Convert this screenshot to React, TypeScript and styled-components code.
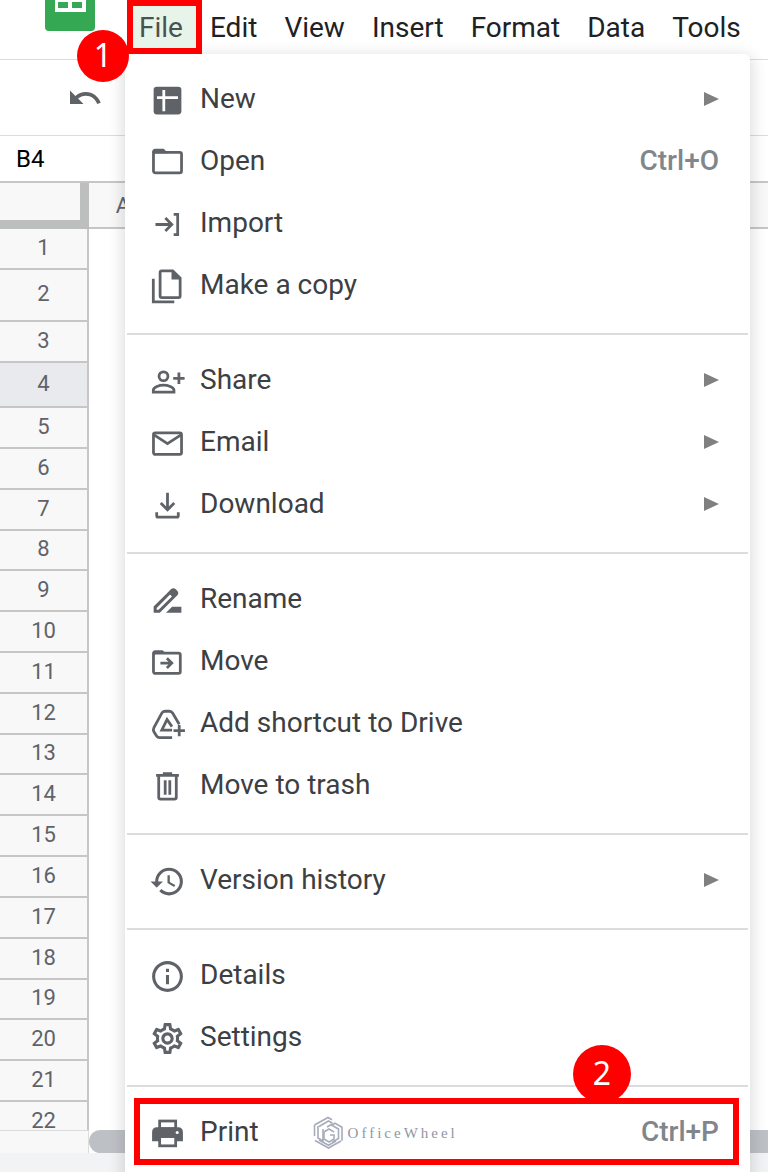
import React from "react";
import styled, { createGlobalStyle } from "styled-components";
import {
  MdDriveFileRenameOutline,
  MdHistory,
  MdInfoOutline,
  MdOutlineSettings,
  MdUndo,
} from "react-icons/md";

const GlobalStyle = createGlobalStyle`
  *, *::before, *::after { box-sizing: border-box; }
  body {
    margin: 0;
    background: #fff;
    color: #202124;
    font-family: Roboto, "Liberation Sans", sans-serif;
  }
  button, input { font: inherit; color: inherit; }
`;

const Page = styled.div`
  position: relative;
  display: flex;
  flex-direction: column;
  height: 100vh;
  overflow: hidden;
`;

/* ---------- header ---------- */

const Header = styled.header`
  flex: none;
  display: flex;
  height: 60px;
  border-bottom: 1px solid #dadce0;
`;

const LogoSlot = styled.div`
  flex: none;
  width: 126px;
  padding-left: 45px;

  svg { display: block; }
`;

const MenuBar = styled.nav`
  display: flex;
  align-items: flex-start;
  gap: 1px;
  padding-top: 5px;
`;

const MenuBarButton = styled.button`
  position: relative;
  height: 44px;
  padding: 0 13px;
  border: 0;
  background: none;
  font-size: 28px;
  line-height: 46px;
  white-space: nowrap;
`;

const MenuBarLabel = styled.span<{ $open?: boolean }>`
  position: relative;
  z-index: 4;
  color: ${(p) => (p.$open ? "#4b524e" : "#202124")};
`;

const Toolbar = styled.div`
  flex: none;
  display: flex;
  align-items: center;
  height: 76px;
  padding-left: 67px;
  border-bottom: 1px solid #dadce0;
`;

const ToolButton = styled.button`
  display: flex;
  padding: 0;
  border: 0;
  background: none;
  color: #5f6368;
`;

const NameBar = styled.div`
  flex: none;
  height: 47px;
  border-bottom: 2px solid #c6c6c6;
`;

const NameBox = styled.input`
  width: 110px;
  height: 45px;
  padding: 0 16px;
  border: 0;
  outline: 0;
  background: none;
  color: #000;
  font-size: 24px;
`;

/* ---------- sheet ---------- */

const SheetArea = styled.main`
  flex: 1;
  min-height: 0;
  overflow: hidden;
`;

const Sheet = styled.table`
  width: 100%;
  table-layout: fixed;
  border-collapse: separate;
  border-spacing: 0;
`;

const Corner = styled.td`
  width: 89px;
  height: 46px;
  padding: 0;
  border: solid #bcbfbe;
  border-width: 0 9px 9px 0;
  background: #f8f8f8;
`;

const ColumnHead = styled.th<{ $width?: number }>`
  width: ${(p) => (p.$width ? `${p.$width}px` : "auto")};
  padding: 0;
  border-bottom: 2px solid #c6c6c6;
  background: #f8f8f8;
  color: #5f6368;
  font-size: 22px;
  font-weight: 400;
`;

const RowHead = styled.th<{ $height: number; $active?: boolean }>`
  height: ${(p) => p.$height}px;
  padding: 0 0 2px;
  border: solid #c6c6c6;
  border-width: 0 2px 2px 0;
  background: ${(p) => (p.$active ? "#e8eaed" : "#f8f8f8")};
  color: #5f6368;
  font-size: 22px;
  line-height: 22px;
  font-weight: 400;
`;

const ScrollRow = styled.div`
  flex: none;
  display: flex;
  height: 23px;
`;

const ScrollCorner = styled.div`
  width: 89px;
  border: solid #dcdcdc;
  border-width: 1px 1px 0 0;
  background: #f8f8f8;
`;

const ScrollThumb = styled.div`
  flex: 1;
  border-radius: 12px 0 0 12px;
  background: #bdc1c6;
`;

const Footer = styled.footer`
  flex: none;
  height: 19px;
  background: #f1f3f4;
`;

/* ---------- file menu ---------- */

const Menu = styled.div`
  position: absolute;
  z-index: 2;
  top: 54px;
  left: 125px;
  right: 18px;
  max-width: 625px;
  padding: 14px 0;
  border-radius: 6px;
  background: #fff;
  box-shadow: 0 4px 14px 3px rgba(60, 64, 67, 0.17);
`;

const Separator = styled.hr`
  height: 2px;
  margin: 17px 2px 14px;
  border: 0;
  background: #dadce0;
`;

const MenuItem = styled.button`
  position: relative;
  display: flex;
  align-items: center;
  width: 100%;
  height: 62px;
  padding: 0 31px 0 24px;
  border: 0;
  background: none;
  color: #3c4043;
  font-size: 28px;
  line-height: 32px;
  text-align: left;
`;

const ItemIcon = styled.span`
  flex: none;
  display: flex;
  width: 37px;
  height: 37px;
  margin-right: 14px;
  padding-top: 1px;
  color: #5f6368;

  svg { flex: none; }
`;

const Shortcut = styled.span`
  margin-left: auto;
  color: #80868b;
  font-weight: 500;
`;

const Arrow = styled.svg`
  margin-left: auto;
  fill: #808080;
`;

const Watermark = styled.span`
  display: flex;
  align-items: center;
  gap: 4px;
  margin-left: 54px;
  padding-top: 2px;
  color: #8f96a6;
  font-family: "Liberation Serif", serif;
  font-size: 15px;
  letter-spacing: 3px;
`;

/* ---------- step annotations ---------- */

const FileFrame = styled.span`
  position: absolute;
  z-index: 3;
  inset: -5px -6px -5px 1px;
  border: 6px solid #f00;
  background: #e6f4ea;
`;

const PrintFrame = styled.span`
  position: absolute;
  inset: -3px 11px -2px 9px;
  border: 6px solid #f00;
`;

const Badge = styled.span<{ $size: number; $top: number; $left: number }>`
  position: absolute;
  z-index: 5;
  top: ${(p) => p.$top}px;
  left: ${(p) => p.$left}px;
  width: ${(p) => p.$size}px;
  height: ${(p) => p.$size}px;
  border-radius: 50%;
  background: #f00;
  color: #fff;
  font-family: "Noto Sans", sans-serif;
  font-size: 32px;
  line-height: ${(p) => p.$size - 2}px;
  text-align: center;
`;

const BadgeLayer = styled.span`
  position: absolute;
  inset: 0;
  z-index: 0;

  & > span { z-index: 0; }
`;

/* ---------- icons ---------- */

const Line = ({ children }: { children: React.ReactNode }) => (
  <svg width="37" height="37" viewBox="0 0 24 24" fill="none" stroke="currentColor" strokeWidth="1.8" aria-hidden="true">
    {children}
  </svg>
);

const NewIcon = () => (
  <Line>
    <rect x="3" y="3" width="18" height="18" rx="2" fill="currentColor" stroke="none" />
    <path d="M9.6 5.2v13.8M5.2 10.2h13.6" stroke="#fff" />
  </Line>
);

const OpenIcon = () => (
  <Line>
    <path d="M2 6V5c0-1.100.9-2 2-2h5.500l3 3z" fill="currentColor" stroke="none" />
    <rect x="2.9" y="5.5" width="18.2" height="13.2" rx="1.2" />
  </Line>
);

const ImportIcon = () => (
  <Line>
    <path d="M4.2 12h10M10.6 7.8l4.2 4.2-4.2 4.2M16 5.4h2.6v13.2H16" />
  </Line>
);

const CopyIcon = () => (
  <Line>
    <path d="M2.8 7v15h13.6" />
    <path d="M8.2 1.8h7.2l4.8 4.8v11.6c0 .6-.4 1-1 1h-11c-.6 0-1-.4-1-1V2.8c0-.6.4-1 1-1z" />
    <path d="M14.6 1.2v6.2h6.2z" fill="currentColor" stroke="none" />
  </Line>
);

const ShareIcon = () => (
  <Line>
    <circle cx="9.4" cy="8.6" r="2.9" />
    <path d="M2.8 18.9v-1.3c0-2 4-3.2 6.6-3.2s6.8 1.2 6.8 3.2v1.3z" />
    <path d="M19.4 6.2v7.4M15.7 9.9h7.4" />
  </Line>
);

const EmailIcon = () => (
  <Line>
    <rect x="2.9" y="5.1" width="18.2" height="14" rx="1.2" />
    <path d="M3 6.2l9 5.9 9-5.9" />
  </Line>
);

const DownloadIcon = () => (
  <Line>
    <path d="M12 3.8v10.6M7.6 10.4l4.4 4.4 4.4-4.4M5 16.4v2.2c0 .6.4 1 1 1h12c.6 0 1-.4 1-1v-2.2" />
  </Line>
);

const MoveIcon = () => (
  <Line>
    <path d="M2 6c0-1.1.9-2 2-2h4.8l2.4 2.4H2z" fill="currentColor" stroke="none" />
    <rect x="2.9" y="5.9" width="17.4" height="13.2" rx="1.2" />
    <path d="M7.4 12.4h7M11.6 9.2l3.2 3.2-3.2 3.2" />
  </Line>
);

const DriveIcon = () => (
  <Line>
    <path d="M15 20.5H7c-1 0-1.7-.4-2.2-1.2l-1.6-2.6c-.5-.9-.5-1.8 0-2.7L8.300 4.600c.5-.9 1.100-1.200 2-1.200h3c.9 0 1.500.4 2 1.200l4.300 7.200" />
    <path d="M15 15.600H8.300L11.700 8.800l3.200 4.600" />
    <path d="M19.600 12.300v7.400M15.900 16h7.400" />
  </Line>
);

const TrashIcon = () => (
  <Line>
    <path d="M4.6 4.8h14.8M9 3.7h6" />
    <path d="M6.3 5.2v13.8c0 .7.5 1.2 1.2 1.2h9c.7 0 1.2-.5 1.2-1.2V5.2M10.5 8v9.4M13.5 8v9.4" />
  </Line>
);

const PrintIcon = () => (
  <Line>
    <rect x="6.9" y="3.9" width="10.4" height="5" />
    <path d="M5 8h14c1.7 0 3 1.3 3 3v6H2v-6c0-1.700 1.300-3 3-3z" fill="currentColor" stroke="none" />
    <rect x="6.9" y="14" width="10.4" height="6" fill="#fff" />
    <circle cx="18.3" cy="11.3" r="1" fill="#fff" stroke="none" />
  </Line>
);

const SheetsLogo = () => (
  <svg width="50" height="31" viewBox="0 0 50 31" aria-hidden="true">
    <path d="M0 0h50v27a4 4 0 0 1-4 4H4a4 4 0 0 1-4-4z" fill="#34a853" />
    <path d="M10 0h31v12H10z" fill="#fff" />
    <path d="M13 2h10v6H13zM27 2h10v6H27z" fill="#34a853" />
  </svg>
);

const WheelLogo = () => (
  <svg width="31" height="34" viewBox="0 0 31 34" fill="none" stroke="#a6acb9" strokeWidth="1.6" aria-hidden="true">
    <path d="M1.5 9v11M5 10v12l5 3V13M1.5 9L15 1.5l4 2.3M6 10.5l9.500-5.500 4 2.300M18 9.500l4-2.300 7 4v13.500M14 11l4-2.300 7.500 4.300v9.500l-6 3.500" />
    <path d="M2 24.500l13.500 7.500L28 25M6 24l9.500 5.300L23 25M21 16l-5-3-5 3v7l5 3 5-3v-4h-4" />
  </svg>
);

/* ---------- data ---------- */

type Entry = { label: string; icon: React.ReactNode; submenu?: boolean; keys?: string; marked?: boolean };

const groups: Entry[][] = [
  [
    { label: "New", icon: <NewIcon />, submenu: true },
    { label: "Open", icon: <OpenIcon />, keys: "Ctrl+O" },
    { label: "Import", icon: <ImportIcon /> },
    { label: "Make a copy", icon: <CopyIcon /> },
  ],
  [
    { label: "Share", icon: <ShareIcon />, submenu: true },
    { label: "Email", icon: <EmailIcon />, submenu: true },
    { label: "Download", icon: <DownloadIcon />, submenu: true },
  ],
  [
    { label: "Rename", icon: <MdDriveFileRenameOutline size={37} /> },
    { label: "Move", icon: <MoveIcon /> },
    { label: "Add shortcut to Drive", icon: <DriveIcon /> },
    { label: "Move to trash", icon: <TrashIcon /> },
  ],
  [{ label: "Version history", icon: <MdHistory size={37} />, submenu: true }],
  [
    { label: "Details", icon: <MdInfoOutline size={37} /> },
    { label: "Settings", icon: <MdOutlineSettings size={37} /> },
  ],
  [{ label: "Print", icon: <PrintIcon />, keys: "Ctrl+P", marked: true }],
];

const rowHeights = [41, 52, 41, 45, 41, 41, 41, 40, 41, 41, 41, 41, 40, 41, 41, 41, 41, 41, 40, 41, 41, 41];
const activeRow = 4;

export default function App() {
  return (
    <Page>
      <GlobalStyle />
      <Header>
        <LogoSlot>
          <SheetsLogo />
        </LogoSlot>
        <MenuBar aria-label="Main menu">
          <MenuBarButton type="button" aria-expanded="true">
            <FileFrame />
            <MenuBarLabel $open>File</MenuBarLabel>
          </MenuBarButton>
          {["Edit", "View", "Insert", "Format", "Data", "Tools"].map((name) => (
            <MenuBarButton type="button" key={name}>
              <MenuBarLabel>{name}</MenuBarLabel>
            </MenuBarButton>
          ))}
        </MenuBar>
      </Header>
      <Toolbar>
        <ToolButton type="button" aria-label="Undo">
          <MdUndo size={36} />
        </ToolButton>
      </Toolbar>
      <NameBar>
        <NameBox aria-label="Name box" defaultValue="B4" />
      </NameBar>

      <SheetArea>
        <Sheet>
          <thead>
            <tr>
              <Corner />
              <ColumnHead scope="col" $width={68}>A</ColumnHead>
              <ColumnHead scope="col" />
            </tr>
          </thead>
          <tbody>
            {rowHeights.map((height, i) => (
              <tr key={i}>
                <RowHead scope="row" $height={height} $active={i + 1 === activeRow}>
                  {i + 1}
                </RowHead>
                <td />
                <td />
              </tr>
            ))}
          </tbody>
        </Sheet>
      </SheetArea>
      <ScrollRow>
        <ScrollCorner />
        <ScrollThumb />
      </ScrollRow>
      <Footer />

      <Menu role="menu" aria-label="File">
        {groups.map((group, g) => (
          <React.Fragment key={g}>
            {g > 0 && <Separator />}
            {group.map((item) => (
              <MenuItem type="button" role="menuitem" key={item.label}>
                {item.marked && (
                  <BadgeLayer>
                    <Badge $size={58} $top={-56} $left={448}>2</Badge>
                    <PrintFrame />
                  </BadgeLayer>
                )}
                <ItemIcon>{item.icon}</ItemIcon>
                {item.label}
                {item.marked && (
                  <Watermark>
                    <WheelLogo />
                    OfficeWheel
                  </Watermark>
                )}
                {item.keys && <Shortcut>{item.keys}</Shortcut>}
                {item.submenu && (
                  <Arrow width="15" height="14" viewBox="0 0 15 14" aria-hidden="true">
                    <path d="M0 0l15 7-15 7z" />
                  </Arrow>
                )}
              </MenuItem>
            ))}
          </React.Fragment>
        ))}
      </Menu>
      <Badge $size={52} $top={30} $left={77}>1</Badge>
    </Page>
  );
}
